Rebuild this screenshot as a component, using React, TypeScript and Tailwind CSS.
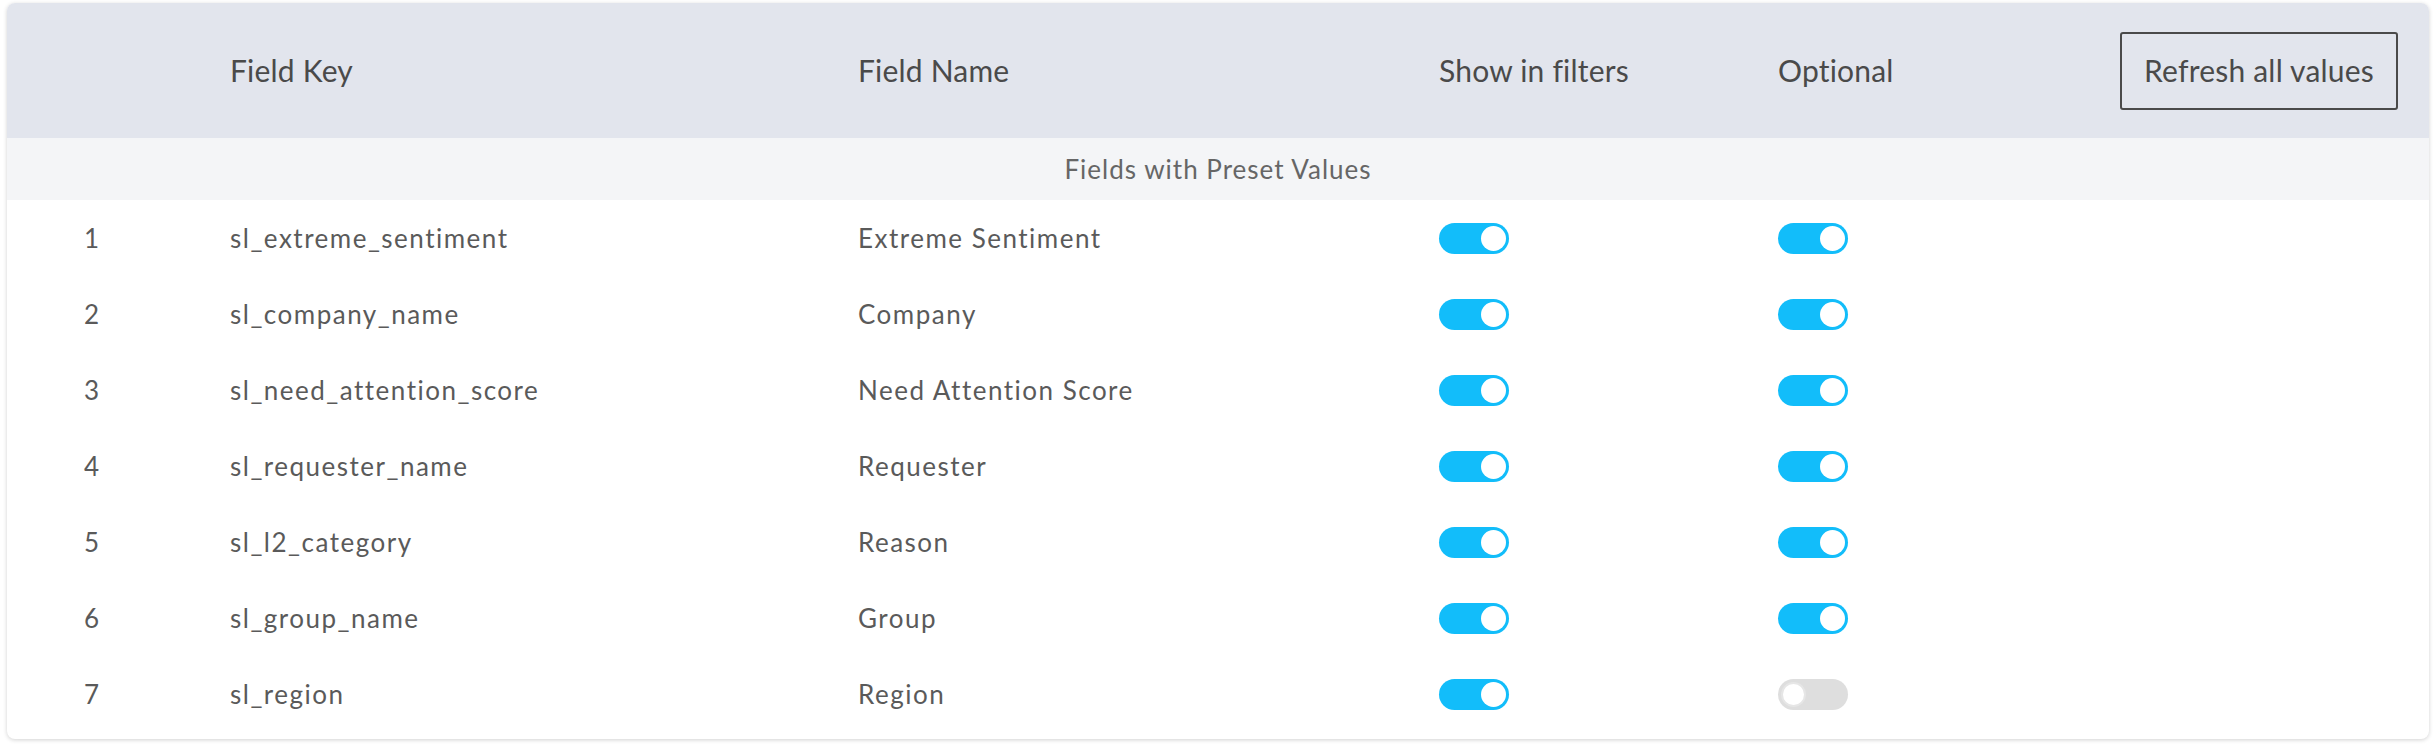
import { useState } from 'react';

interface Field {
  key: string;
  name: string;
  showInFilters: boolean;
  optional: boolean;
}

const fields: Field[] = [
  { key: 'sl_extreme_sentiment', name: 'Extreme Sentiment', showInFilters: true, optional: true },
  { key: 'sl_company_name', name: 'Company', showInFilters: true, optional: true },
  { key: 'sl_need_attention_score', name: 'Need Attention Score', showInFilters: true, optional: true },
  { key: 'sl_requester_name', name: 'Requester', showInFilters: true, optional: true },
  { key: 'sl_l2_category', name: 'Reason', showInFilters: true, optional: true },
  { key: 'sl_group_name', name: 'Group', showInFilters: true, optional: true },
  { key: 'sl_region', name: 'Region', showInFilters: true, optional: false },
];

function Toggle({ on, onChange }: { on: boolean; onChange: () => void }) {
  return (
    <button
      onClick={onChange}
      className={`flex items-center w-[70px] h-[31px] rounded-full px-[3px] ${
        on ? 'bg-[#12bdfa] justify-end' : 'bg-[#dedede] justify-start'
      }`}
    >
      <span
        className={`block w-[25px] h-[25px] rounded-full bg-white ${on ? '' : 'border-2 border-[#e6e6e6]'}`}
      />
    </button>
  );
}

const cols = 'grid grid-cols-[223px_628px_581px_339px_1fr] items-center';

export default function App() {
  const [rows, setRows] = useState(fields);

  const flip = (i: number, prop: 'showInFilters' | 'optional') => {
    setRows((prev) => prev.map((r, idx) => (idx === i ? { ...r, [prop]: !r[prop] } : r)));
  };

  return (
    <div className="min-h-screen bg-white pt-[3px] px-[7px] font-['Lato',sans-serif]">
      <div className="bg-white rounded-[8px] shadow-[0_1px_4px_rgba(0,0,0,0.18)] overflow-hidden pb-[7px]">
        <div className={`${cols} h-[135px] bg-[#e2e5ed] text-[30px] tracking-[0.2px] text-[#4a4a4a]`}>
          <div></div>
          <div>Field Key</div>
          <div>Field Name</div>
          <div>Show in filters</div>
          <div className="flex items-center justify-between">
            <span>Optional</span>
            <button className="h-[78px] px-[22px] mr-[31px] border-2 border-[#4a4a4a] rounded-[3px] text-[30px] text-[#4a4a4a]">
              Refresh all values
            </button>
          </div>
        </div>

        <div className="h-[62px] flex items-center justify-center bg-[#f4f5f7] text-[26px] tracking-[1px] text-[#666]">
          Fields with Preset Values
        </div>

        {rows.map((f, i) => (
          <div key={f.key} className={`${cols} h-[76px] text-[26px] tracking-[1.5px] text-[#5a5a5a]`}>
            <div className="pl-[77px]">{i + 1}</div>
            <div>{f.key}</div>
            <div>{f.name}</div>
            <div>
              <Toggle on={f.showInFilters} onChange={() => flip(i, 'showInFilters')} />
            </div>
            <div>
              <Toggle on={f.optional} onChange={() => flip(i, 'optional')} />
            </div>
          </div>
        ))}
      </div>
    </div>
  );
}
